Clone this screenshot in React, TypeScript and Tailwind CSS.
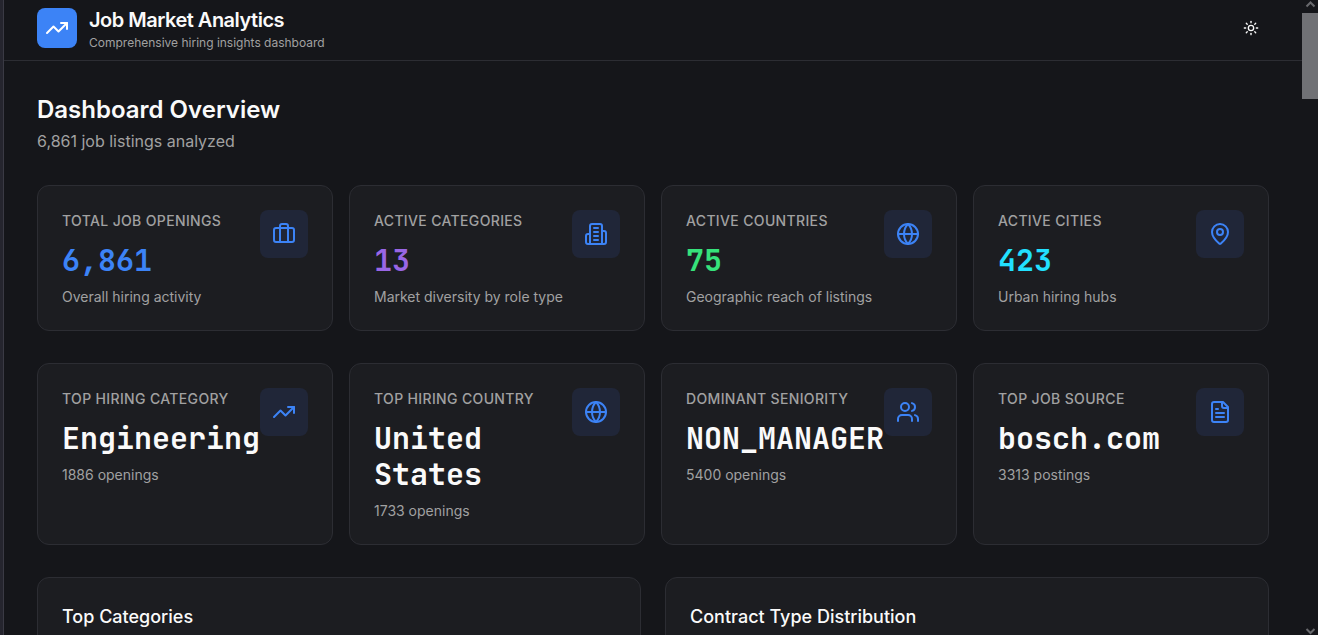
import type { ReactNode } from "react";

function Icon({ children, className = "size-6" }: { children: ReactNode; className?: string }) {
  return (
    <svg
      className={className}
      viewBox="0 0 24 24"
      fill="none"
      stroke="currentColor"
      strokeWidth="2"
      strokeLinecap="round"
      strokeLinejoin="round"
      aria-hidden="true"
    >
      {children}
    </svg>
  );
}

const TrendingUp = () => (
  <Icon>
    <polyline points="22 7 13.5 15.5 8.5 10.5 2 17" />
    <polyline points="16 7 22 7 22 13" />
  </Icon>
);

const Briefcase = () => (
  <Icon>
    <path d="M16 20V4a2 2 0 0 0-2-2h-4a2 2 0 0 0-2 2v16" />
    <rect width="20" height="14" x="2" y="6" rx="2" />
  </Icon>
);

const Building = () => (
  <Icon>
    <path d="M6 22V4a2 2 0 0 1 2-2h8a2 2 0 0 1 2 2v18Z" />
    <path d="M6 12H4a2 2 0 0 0-2 2v6a2 2 0 0 0 2 2h2" />
    <path d="M18 9h2a2 2 0 0 1 2 2v9a2 2 0 0 1-2 2h-2" />
    <path d="M10 6h4" />
    <path d="M10 10h4" />
    <path d="M10 14h4" />
    <path d="M10 18h4" />
  </Icon>
);

const Globe = () => (
  <Icon>
    <circle cx="12" cy="12" r="10" />
    <path d="M12 2a14.5 14.5 0 0 0 0 20 14.5 14.5 0 0 0 0-20" />
    <path d="M2 12h20" />
  </Icon>
);

const MapPin = () => (
  <Icon>
    <path d="M20 10c0 4.993-5.539 10.193-7.399 11.799a1 1 0 0 1-1.202 0C9.539 20.193 4 14.993 4 10a8 8 0 0 1 16 0" />
    <circle cx="12" cy="10" r="3" />
  </Icon>
);

const Users = () => (
  <Icon>
    <path d="M16 21v-2a4 4 0 0 0-4-4H6a4 4 0 0 0-4 4v2" />
    <circle cx="9" cy="7" r="4" />
    <path d="M22 21v-2a4 4 0 0 0-3-3.87" />
    <path d="M16 3.13a4 4 0 0 1 0 7.75" />
  </Icon>
);

const FileText = () => (
  <Icon>
    <path d="M15 2H6a2 2 0 0 0-2 2v16a2 2 0 0 0 2 2h12a2 2 0 0 0 2-2V7Z" />
    <path d="M14 2v4a2 2 0 0 0 2 2h4" />
    <path d="M10 9H8" />
    <path d="M16 13H8" />
    <path d="M16 17H8" />
  </Icon>
);

const Sun = () => (
  <Icon className="size-4">
    <circle cx="12" cy="12" r="4" />
    <path d="M12 2v2" />
    <path d="M12 20v2" />
    <path d="m4.93 4.93 1.41 1.41" />
    <path d="m17.66 17.66 1.41 1.41" />
    <path d="M2 12h2" />
    <path d="M20 12h2" />
    <path d="m6.34 17.66-1.41 1.41" />
    <path d="m19.07 4.93-1.41 1.41" />
  </Icon>
);

type Stat = {
  label: string;
  value: string;
  note: string;
  icon: ReactNode;
  color: string;
};

const totals: Stat[] = [
  { label: "Total Job Openings", value: "6,861", note: "Overall hiring activity", icon: <Briefcase />, color: "text-[#3c83f6]" },
  { label: "Active Categories", value: "13", note: "Market diversity by role type", icon: <Building />, color: "text-[#9966e5]" },
  { label: "Active Countries", value: "75", note: "Geographic reach of listings", icon: <Globe />, color: "text-[#36e27b]" },
  { label: "Active Cities", value: "423", note: "Urban hiring hubs", icon: <MapPin />, color: "text-[#22e0ff]" },
];

const leaders: Stat[] = [
  { label: "Top Hiring Category", value: "Engineering", note: "1886 openings", icon: <TrendingUp />, color: "text-[#fafafa]" },
  { label: "Top Hiring Country", value: "United States", note: "1733 openings", icon: <Globe />, color: "text-[#fafafa]" },
  { label: "Dominant Seniority", value: "NON_MANAGER", note: "5400 openings", icon: <Users />, color: "text-[#fafafa]" },
  { label: "Top Job Source", value: "bosch.com", note: "3313 postings", icon: <FileText />, color: "text-[#fafafa]" },
];

function StatCard({ label, value, note, icon, color }: Stat) {
  return (
    <article className="flex items-start justify-between rounded-xl border border-[#2c2d33] bg-[#1c1d21] px-6 pt-6 pb-[22px]">
      <div className="min-w-0 flex-1">
        <h3 className="text-sm leading-[22px] font-medium tracking-wide whitespace-nowrap text-[#a1a1a1] uppercase">{label}</h3>
        <p className={`mt-2.5 font-['JetBrains_Mono','DejaVu_Sans_Mono',monospace] text-3xl font-bold ${color}`}>{value}</p>
        <p className="mt-2 text-sm leading-[22px] text-[#a1a1a1]">{note}</p>
      </div>
      <div className="shrink-0 rounded-lg bg-[#202638] p-3 text-[#3c83f6]">{icon}</div>
    </article>
  );
}

function StatRow({ stats }: { stats: Stat[] }) {
  return (
    <div className="mb-8 grid grid-cols-4 gap-4">
      {stats.map((stat) => (
        <StatCard key={stat.label} {...stat} />
      ))}
    </div>
  );
}

function ChartCard({ title }: { title: string }) {
  return (
    <section className="h-96 rounded-xl border border-[#2c2d33] bg-[#1c1d21] p-6">
      <h3 className="text-lg leading-[30px] font-medium text-[#fafafa]">{title}</h3>
    </section>
  );
}

function ScrollTrack() {
  return (
    <div className="flex w-4 shrink-0 flex-col items-center bg-[#15161a] text-[#68696d]" aria-hidden="true">
      <svg className="h-[13px] w-4 shrink-0" viewBox="0 0 16 13" fill="none" stroke="currentColor" strokeWidth="2">
        <path d="M4.5 6.5 8.5 2.5 12.5 6.5" />
      </svg>
      <div className="h-[86px] w-full shrink-0 bg-[#707175]" />
      <div className="flex-1" />
      <svg className="h-[13px] w-4 shrink-0" viewBox="0 0 16 13" fill="none" stroke="currentColor" strokeWidth="2">
        <path d="M4.5 7 8.5 11 12.5 7" />
      </svg>
    </div>
  );
}

export default function App() {
  return (
    <div className="flex h-screen overflow-hidden bg-[#15161a] font-['Inter',sans-serif] text-[#fafafa]">
      <div className="w-1 shrink-0 border-r border-[#3a3a44] bg-[#25252e]" />
      <div className="min-w-0 flex-1 overflow-hidden">
        <header className="flex items-start justify-between border-b border-[#2c2d33] px-[33px] pt-2 pb-1.5">
          <div className="flex items-start gap-3">
            <div className="rounded-lg bg-[#3c83f6] p-2 text-white">
              <TrendingUp />
            </div>
            <div>
              <h1 className="text-xl leading-6 font-semibold tracking-tight">Job Market Analytics</h1>
              <p className="text-xs leading-[22px] text-[#a1a1a1]">Comprehensive hiring insights dashboard</p>
            </div>
          </div>
          <button type="button" aria-label="Toggle theme" className="flex h-10 w-9 items-center justify-center rounded-md">
            <Sun />
          </button>
        </header>
        <main className="px-[33px] pt-8">
          <div className="mb-8">
            <h2 className="text-2xl leading-[34px] font-semibold">Dashboard Overview</h2>
            <p className="mt-0.5 text-base text-[#a1a1a1]">6,861 job listings analyzed</p>
          </div>
          <StatRow stats={totals} />
          <StatRow stats={leaders} />
          <div className="grid grid-cols-2 gap-6">
            <ChartCard title="Top Categories" />
            <ChartCard title="Contract Type Distribution" />
          </div>
        </main>
      </div>
      <ScrollTrack />
    </div>
  );
}
